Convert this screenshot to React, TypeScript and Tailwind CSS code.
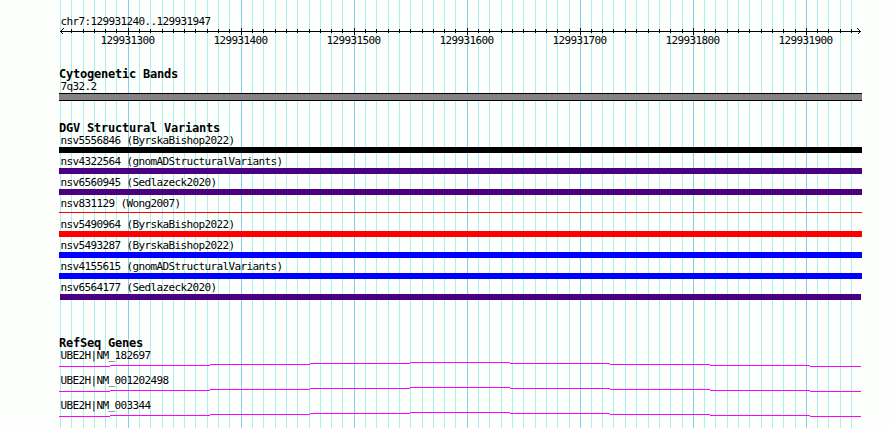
interface Variant {
  id: string;
  study: string;
  cls: string;
}

const GRID = [
  60, 71, 83, 94, 105, 116, 128, 139, 150, 162, 173, 184, 195, 207, 218, 229,
  241, 252, 263, 275, 286, 297, 309, 320, 331, 342, 354, 365, 376, 388, 399,
  410, 422, 433, 444, 455, 467, 478, 489, 501, 512, 523, 535, 546, 557, 569,
  580, 591, 602, 613, 625, 636, 648, 659, 670, 682, 693, 704, 715, 727, 738,
  749, 761, 772, 783, 795, 806, 817, 828, 840, 851,
];

const MAJOR = [128, 241, 354, 467, 580, 693, 806];

const VARIANTS: Variant[] = [
  { id: "nsv5556846", study: "ByrskaBishop2022", cls: "h-1.5 bg-black" },
  { id: "nsv4322564", study: "gnomADStructuralVariants", cls: "h-1.5 bg-[#4b0082]" },
  { id: "nsv6560945", study: "Sedlazeck2020", cls: "h-1.5 bg-[#4b0082]" },
  { id: "nsv831129", study: "Wong2007", cls: "mt-0.5 h-px bg-[#ff0000]" },
  { id: "nsv5490964", study: "ByrskaBishop2022", cls: "h-1.5 bg-[#ff0000]" },
  { id: "nsv5493287", study: "ByrskaBishop2022", cls: "h-1.5 bg-[#0000ff]" },
  { id: "nsv4155615", study: "gnomADStructuralVariants", cls: "h-1.5 bg-[#0000ff]" },
  { id: "nsv6564177", study: "Sedlazeck2020", cls: "mx-px h-1.5 bg-[#4b0082]" },
];

const GENES = ["UBE2H|NM_182697", "UBE2H|NM_001202498", "UBE2H|NM_003344"];

function Gridlines() {
  return (
    <svg
      className="absolute inset-0"
      width="890"
      height="428"
      shapeRendering="crispEdges"
    >
      {GRID.map((x) => (
        <rect
          key={x}
          x={x}
          y={0}
          width={1}
          height={428}
          fill={MAJOR.includes(x) ? "#87ceeb" : "#afeeee"}
        />
      ))}
    </svg>
  );
}

function Ruler() {
  return (
    <svg
      className="-ml-[59px] block max-w-none"
      width="890"
      height="8"
      shapeRendering="crispEdges"
    >
      <rect x={60} y={3} width={801} height={1} />
      {GRID.slice(1).map((x) => (
        <rect
          key={x}
          x={x}
          y={MAJOR.includes(x) ? 0 : 1}
          width={1}
          height={MAJOR.includes(x) ? 7 : 4}
        />
      ))}
      <path
        d="M63.5 0.5L60.5 3.5L63.5 6.5M857.5 0.5L860.5 3.5L857.5 6.5"
        fill="none"
        stroke="#000"
      />
    </svg>
  );
}

// Introns are drawn as a shallow hat, one pixel higher per segment
function Intron() {
  return (
    <svg
      className="block"
      width="803"
      height="5"
      fill="#ff00ff"
      shapeRendering="crispEdges"
    >
      <rect x={0} y={4} width={51} height={1} />
      <rect x={51} y={3} width={100} height={1} />
      <rect x={151} y={2} width={100} height={1} />
      <rect x={251} y={1} width={100} height={1} />
      <rect x={351} y={0} width={100} height={1} />
      <rect x={451} y={1} width={100} height={1} />
      <rect x={551} y={2} width={100} height={1} />
      <rect x={651} y={3} width={100} height={1} />
      <rect x={751} y={4} width={51} height={1} />
    </svg>
  );
}

function TrackTitle({ children }: { children: string }) {
  return (
    <h2 className="h-3 text-[12px] leading-3 font-bold tracking-[-0.224px]">
      {children}
    </h2>
  );
}

export default function App() {
  return (
    <div className="relative h-[428px] w-[890px] overflow-hidden bg-[#fdfffd] font-['DejaVu_Sans_Mono',monospace] text-[11px] leading-[14px] tracking-[-0.622px] whitespace-nowrap text-black">
      <Gridlines />
      <main className="relative ml-[59px] w-[803px] pt-[15px]">
        <div className="h-[13px] pl-[1.5px]">chr7:129931240..129931947</div>
        <Ruler />
        <div className="-mt-0.5 flex h-3 gap-[59px] pl-[41.5px]">
          {MAJOR.map((x, i) => (
            <span key={x} className="w-[54px]">
              {129931300 + i * 100}
            </span>
          ))}
        </div>

        <section className="mt-[22px]">
          <TrackTitle>Cytogenetic Bands</TrackTitle>
          <div className="h-[13px] pl-[1.5px]">7q32.2</div>
          <div className="h-2 border-y border-black bg-[#848284]" />
        </section>

        <section className="mt-[21px]">
          <TrackTitle>DGV Structural Variants</TrackTitle>
          {VARIANTS.map((v) => (
            <div key={v.id} className="h-[21px]">
              <div className="h-[13px] pl-[1.5px]">
                {v.id} ({v.study})
              </div>
              <div className={v.cls} />
            </div>
          ))}
        </section>

        <section className="mt-[35px]">
          <TrackTitle>RefSeq Genes</TrackTitle>
          {GENES.map((gene) => (
            <div key={gene} className="h-[25px]">
              <div className="h-[13px] pl-[1.5px]">{gene}</div>
              <Intron />
            </div>
          ))}
        </section>
      </main>
    </div>
  );
}
